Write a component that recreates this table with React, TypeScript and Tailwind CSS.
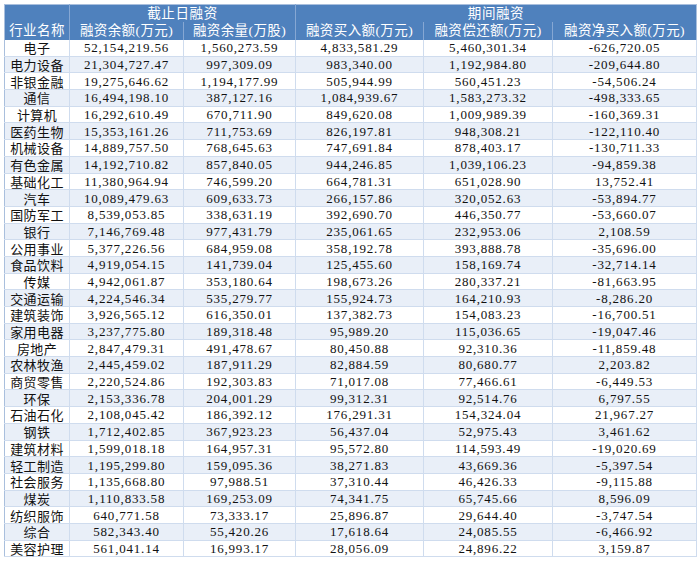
const ROWS: [string, string, string, string, string, string][] = [
  ["电子", "52,154,219.56", "1,560,273.59", "4,833,581.29", "5,460,301.34", "-626,720.05"],
  ["电力设备", "21,304,727.47", "997,309.09", "983,340.00", "1,192,984.80", "-209,644.80"],
  ["非银金融", "19,275,646.62", "1,194,177.99", "505,944.99", "560,451.23", "-54,506.24"],
  ["通信", "16,494,198.10", "387,127.16", "1,084,939.67", "1,583,273.32", "-498,333.65"],
  ["计算机", "16,292,610.49", "670,711.90", "849,620.08", "1,009,989.39", "-160,369.31"],
  ["医药生物", "15,353,161.26", "711,753.69", "826,197.81", "948,308.21", "-122,110.40"],
  ["机械设备", "14,889,757.50", "768,645.63", "747,691.84", "878,403.17", "-130,711.33"],
  ["有色金属", "14,192,710.82", "857,840.05", "944,246.85", "1,039,106.23", "-94,859.38"],
  ["基础化工", "11,380,964.94", "746,599.20", "664,781.31", "651,028.90", "13,752.41"],
  ["汽车", "10,089,479.63", "609,633.73", "266,157.86", "320,052.63", "-53,894.77"],
  ["国防军工", "8,539,053.85", "338,631.19", "392,690.70", "446,350.77", "-53,660.07"],
  ["银行", "7,146,769.48", "977,431.79", "235,061.65", "232,953.06", "2,108.59"],
  ["公用事业", "5,377,226.56", "684,959.08", "358,192.78", "393,888.78", "-35,696.00"],
  ["食品饮料", "4,919,054.15", "141,739.04", "125,455.60", "158,169.74", "-32,714.14"],
  ["传媒", "4,942,061.87", "353,180.64", "198,673.26", "280,337.21", "-81,663.95"],
  ["交通运输", "4,224,546.34", "535,279.77", "155,924.73", "164,210.93", "-8,286.20"],
  ["建筑装饰", "3,926,565.12", "616,350.01", "137,382.73", "154,083.23", "-16,700.51"],
  ["家用电器", "3,237,775.80", "189,318.48", "95,989.20", "115,036.65", "-19,047.46"],
  ["房地产", "2,847,479.31", "491,478.67", "80,450.88", "92,310.36", "-11,859.48"],
  ["农林牧渔", "2,445,459.02", "187,911.29", "82,884.59", "80,680.77", "2,203.82"],
  ["商贸零售", "2,220,524.86", "192,303.83", "71,017.08", "77,466.61", "-6,449.53"],
  ["环保", "2,153,336.78", "204,001.29", "99,312.31", "92,514.76", "6,797.55"],
  ["石油石化", "2,108,045.42", "186,392.12", "176,291.31", "154,324.04", "21,967.27"],
  ["钢铁", "1,712,402.85", "367,923.23", "56,437.04", "52,975.43", "3,461.62"],
  ["建筑材料", "1,599,018.18", "164,957.31", "95,572.80", "114,593.49", "-19,020.69"],
  ["轻工制造", "1,195,299.80", "159,095.36", "38,271.83", "43,669.36", "-5,397.54"],
  ["社会服务", "1,135,668.80", "97,988.51", "37,310.44", "46,426.33", "-9,115.88"],
  ["煤炭", "1,110,833.58", "169,253.09", "74,341.75", "65,745.66", "8,596.09"],
  ["纺织服饰", "640,771.58", "73,333.17", "25,896.87", "29,644.40", "-3,747.54"],
  ["综合", "582,343.40", "55,420.26", "17,618.64", "24,085.55", "-6,466.92"],
  ["美容护理", "561,041.14", "16,993.17", "28,056.09", "24,896.22", "3,159.87"],
];

const HEAD = [
  "行业名称",
  "融资余额(万元)",
  "融资余量(万股)",
  "融资买入额(万元)",
  "融资偿还额(万元)",
  "融资净买入额(万元)",
];

export default function App() {
  return (
    <div className="w-[700px] h-[563px] bg-white p-[4px] font-['Liberation_Serif','Noto_Sans_CJK_SC',serif]">
      <table className="w-[692px] table-fixed border-collapse border border-[#a9bfdd] text-[13px] leading-[15px] text-[#111]">
        <colgroup>
          <col className="w-[65px]" />
          <col className="w-[114px]" />
          <col className="w-[112px]" />
          <col className="w-[128px]" />
          <col className="w-[129px]" />
          <col className="w-[144px]" />
        </colgroup>
        <thead className="bg-[#4f81bd] text-white text-[13.5px]">
          <tr className="h-[17.5px]">
            <th className="p-0 font-normal border-r border-[#86a7d3]" />
            <th colSpan={2} className="p-0 font-normal border-r border-[#86a7d3] tracking-[0.6px]">
              截止日融资
            </th>
            <th colSpan={3} className="p-0 font-normal tracking-[0.6px]">
              期间融资
            </th>
          </tr>
          <tr className="h-[17.5px]">
            {HEAD.map((h, i) => (
              <th
                key={h}
                className={
                  "p-0 font-normal whitespace-nowrap tracking-[0.4px] " +
                  (i < 5 ? "border-r border-[#86a7d3]" : "")
                }
              >
                {h}
              </th>
            ))}
          </tr>
        </thead>
        <tbody>
          {ROWS.map((r, idx) => (
            <tr
              key={r[0]}
              className={
                "h-[16.7px] " + (idx % 2 === 1 ? "bg-[#e9eff8]" : "bg-white")
              }
            >
              {r.map((c, i) => (
                <td
                  key={i}
                  className={
                    "p-0 text-center whitespace-nowrap border-b border-r border-[#cfdcee] " +
                    (i === 0
                      ? "font-['Noto_Sans_CJK_SC',sans-serif] tracking-[0.4px]"
                      : "tracking-[0.8px]")
                  }
                >
                  {c}
                </td>
              ))}
            </tr>
          ))}
        </tbody>
      </table>
    </div>
  );
}
